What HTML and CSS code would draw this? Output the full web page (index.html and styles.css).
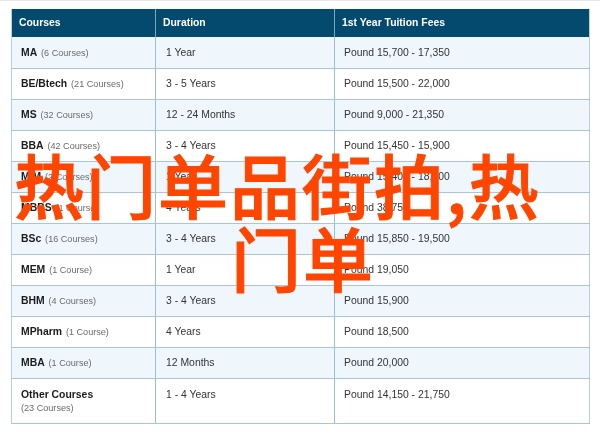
FILE: index.html
```
<!DOCTYPE html>
<html lang="zh">
<head>
<meta charset="utf-8">
<title>热门单品街拍,热门单</title>
<link rel="stylesheet" href="styles.css">
</head>
<body>
<main class="page">
<table class="fees">
<colgroup><col class="c1"><col class="c2"><col class="c3"></colgroup>
<thead><tr><th>Courses</th><th>Duration</th><th>1st Year Tuition Fees</th></tr></thead>
<tbody>
<tr><td><b>MA</b> <span class="n">(6 Courses)</span></td><td>1 Year</td><td>Pound 15,700 - 17,350</td></tr>
<tr><td><b>BE/Btech</b> <span class="n">(21 Courses)</span></td><td>3 - 5 Years</td><td>Pound 15,500 - 22,000</td></tr>
<tr><td><b>MS</b> <span class="n">(32 Courses)</span></td><td>12 - 24 Months</td><td>Pound 9,000 - 21,350</td></tr>
<tr><td><b>BBA</b> <span class="n">(42 Courses)</span></td><td>3 - 4 Years</td><td>Pound 15,450 - 15,900</td></tr>
<tr><td><b>MIM</b> <span class="n">(2 Courses)</span></td><td>1 Year</td><td>Pound 15,400 - 18,000</td></tr>
<tr><td><b>MBBS</b> <span class="n">(1 Course)</span></td><td>4 Years</td><td>Pound 38,750</td></tr>
<tr><td><b>BSc</b> <span class="n">(16 Courses)</span></td><td>3 - 4 Years</td><td>Pound 15,850 - 19,500</td></tr>
<tr><td><b>MEM</b> <span class="n">(1 Course)</span></td><td>1 Year</td><td>Pound 19,050</td></tr>
<tr><td><b>BHM</b> <span class="n">(4 Courses)</span></td><td>3 - 4 Years</td><td>Pound 15,900</td></tr>
<tr><td><b>MPharm</b> <span class="n">(1 Course)</span></td><td>4 Years</td><td>Pound 18,500</td></tr>
<tr><td><b>MBA</b> <span class="n">(1 Course)</span></td><td>12 Months</td><td>Pound 20,000</td></tr>
<tr class="tall"><td><b>Other Courses</b><br><span class="n sub">(23 Courses)</span></td><td>1 - 4 Years</td><td>Pound 14,150 - 21,750</td></tr>
</tbody>
</table>
<h1 class="title"><span class="l1">热门单品街拍,热</span><span class="l2">门单</span></h1>
</main>
</body>
</html>
```
FILE: styles.css
```
html, body { margin: 0; padding: 0; background: #fff; }
.page {
  position: relative;
  width: 600px;
  height: 431px;
  overflow: hidden;
  border-top: 1px solid #e8e8e8;
  box-sizing: border-box;
  padding: 8px 0 0 11px;
  font-family: "Liberation Sans", Arial, sans-serif;
}
.fees {
  width: 578px;
  table-layout: fixed;
  border-collapse: collapse;
  font-size: 10.4px;
  color: #333;
  filter: blur(0.4px);
  border-left: 1px solid #b5d0e0;
  border-right: 1px solid #b5d0e0;
}
.c1 { width: 144px; }
.c2 { width: 179px; }
.c3 { width: 255px; }
th {
  height: 28px;
  box-sizing: border-box;
  padding: 0 0 2px 7px;
  background: #034a6e;
  color: #fff;
  font-size: 10.4px;
  font-weight: bold;
  text-align: left;
  border-left: 1px solid #7fa6bf;
}
th:first-child, td:first-child { border-left: 0; }
td {
  height: 31px;
  box-sizing: border-box;
  padding: 0 0 0 9px;
  vertical-align: middle;
  border-left: 1px solid #9dbdd2;
  border-bottom: 1px solid #a9c6d8;
}
td + td { padding-left: 10px; }
td + td + td { padding-left: 9px; }
tbody tr:nth-child(odd) td { background: #eff7fd; }
td b { color: #1c1c1c; font-size: 10.4px; }
.n { color: #6b6b6b; font-size: 9.1px; margin-left: 1px; }
.sub { margin-left: 0; }
.tall td { height: 45px; padding-top: 9px; vertical-align: top; line-height: 13.5px; }
.title {
  position: absolute;
  left: 14px;
  top: 146px;
  margin: 0;
  color: #ff4500;
  font-family: "Noto Sans CJK SC", sans-serif;
  font-size: 70px;
  letter-spacing: 2px;
  font-weight: 500;
  -webkit-text-stroke: 1px #ff4500;
  line-height: 73px;
}
.l1, .l2 { display: block; white-space: nowrap; }
.l2 { margin-left: 217px; }
```
